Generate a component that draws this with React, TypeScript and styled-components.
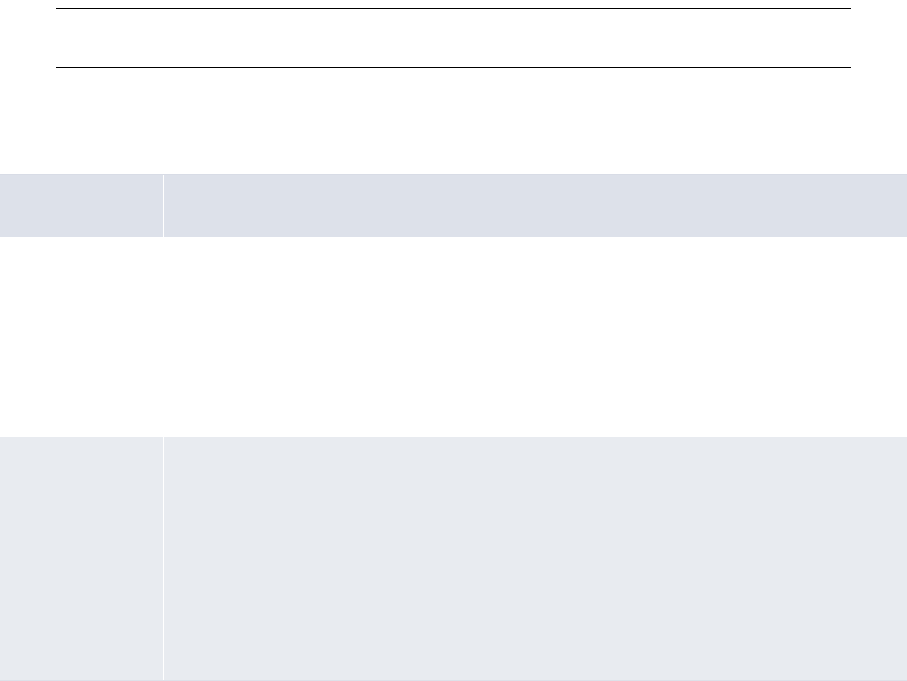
import React from "react";
import styled, { createGlobalStyle } from "styled-components";

const Global = createGlobalStyle`
  html, body { margin: 0; padding: 0; background: #ffffff; }
  body { font-family: "Liberation Sans", Arial, sans-serif; }
`;

const Page = styled.div`
  padding-top: 8px;
  width: 907px;
`;

const TitleBlock = styled.div`
  margin: 0 56px;
  height: 58px;
  border-top: 1px solid #000000;
  border-bottom: 1px solid #000000;
`;

const Table = styled.div`
  margin-top: 106px;
  display: flex;
  flex-direction: column;
  border-bottom: 1px solid #dde1e9;
`;

const Row = styled.div<{ $bg: string; $h: number; $top?: string }>`
  display: grid;
  grid-template-columns: 163px 1fr;
  column-gap: 1px;
  height: ${(p) => p.$h}px;
  background: #ffffff;
  border-top: ${(p) => (p.$top ? `1px solid ${p.$top}` : "none")};
`;

const Cell = styled.div<{ $bg: string }>`
  background: ${(p) => p.$bg};
`;

export default function App() {
  const rows = [
    { bg: "#dde1ea", h: 62, top: "#d8dce6" },
    { bg: "#ffffff", h: 200 },
    { bg: "#e8ebf0", h: 243 },
  ];
  return (
    <>
      <Global />
      <Page>
        <TitleBlock />
        <Table>
          {rows.map((r, i) => (
            <Row key={i} $bg={r.bg} $h={r.h} $top={r.top}>
              <Cell $bg={r.bg} />
              <Cell $bg={r.bg} />
            </Row>
          ))}
        </Table>
      </Page>
    </>
  );
}
